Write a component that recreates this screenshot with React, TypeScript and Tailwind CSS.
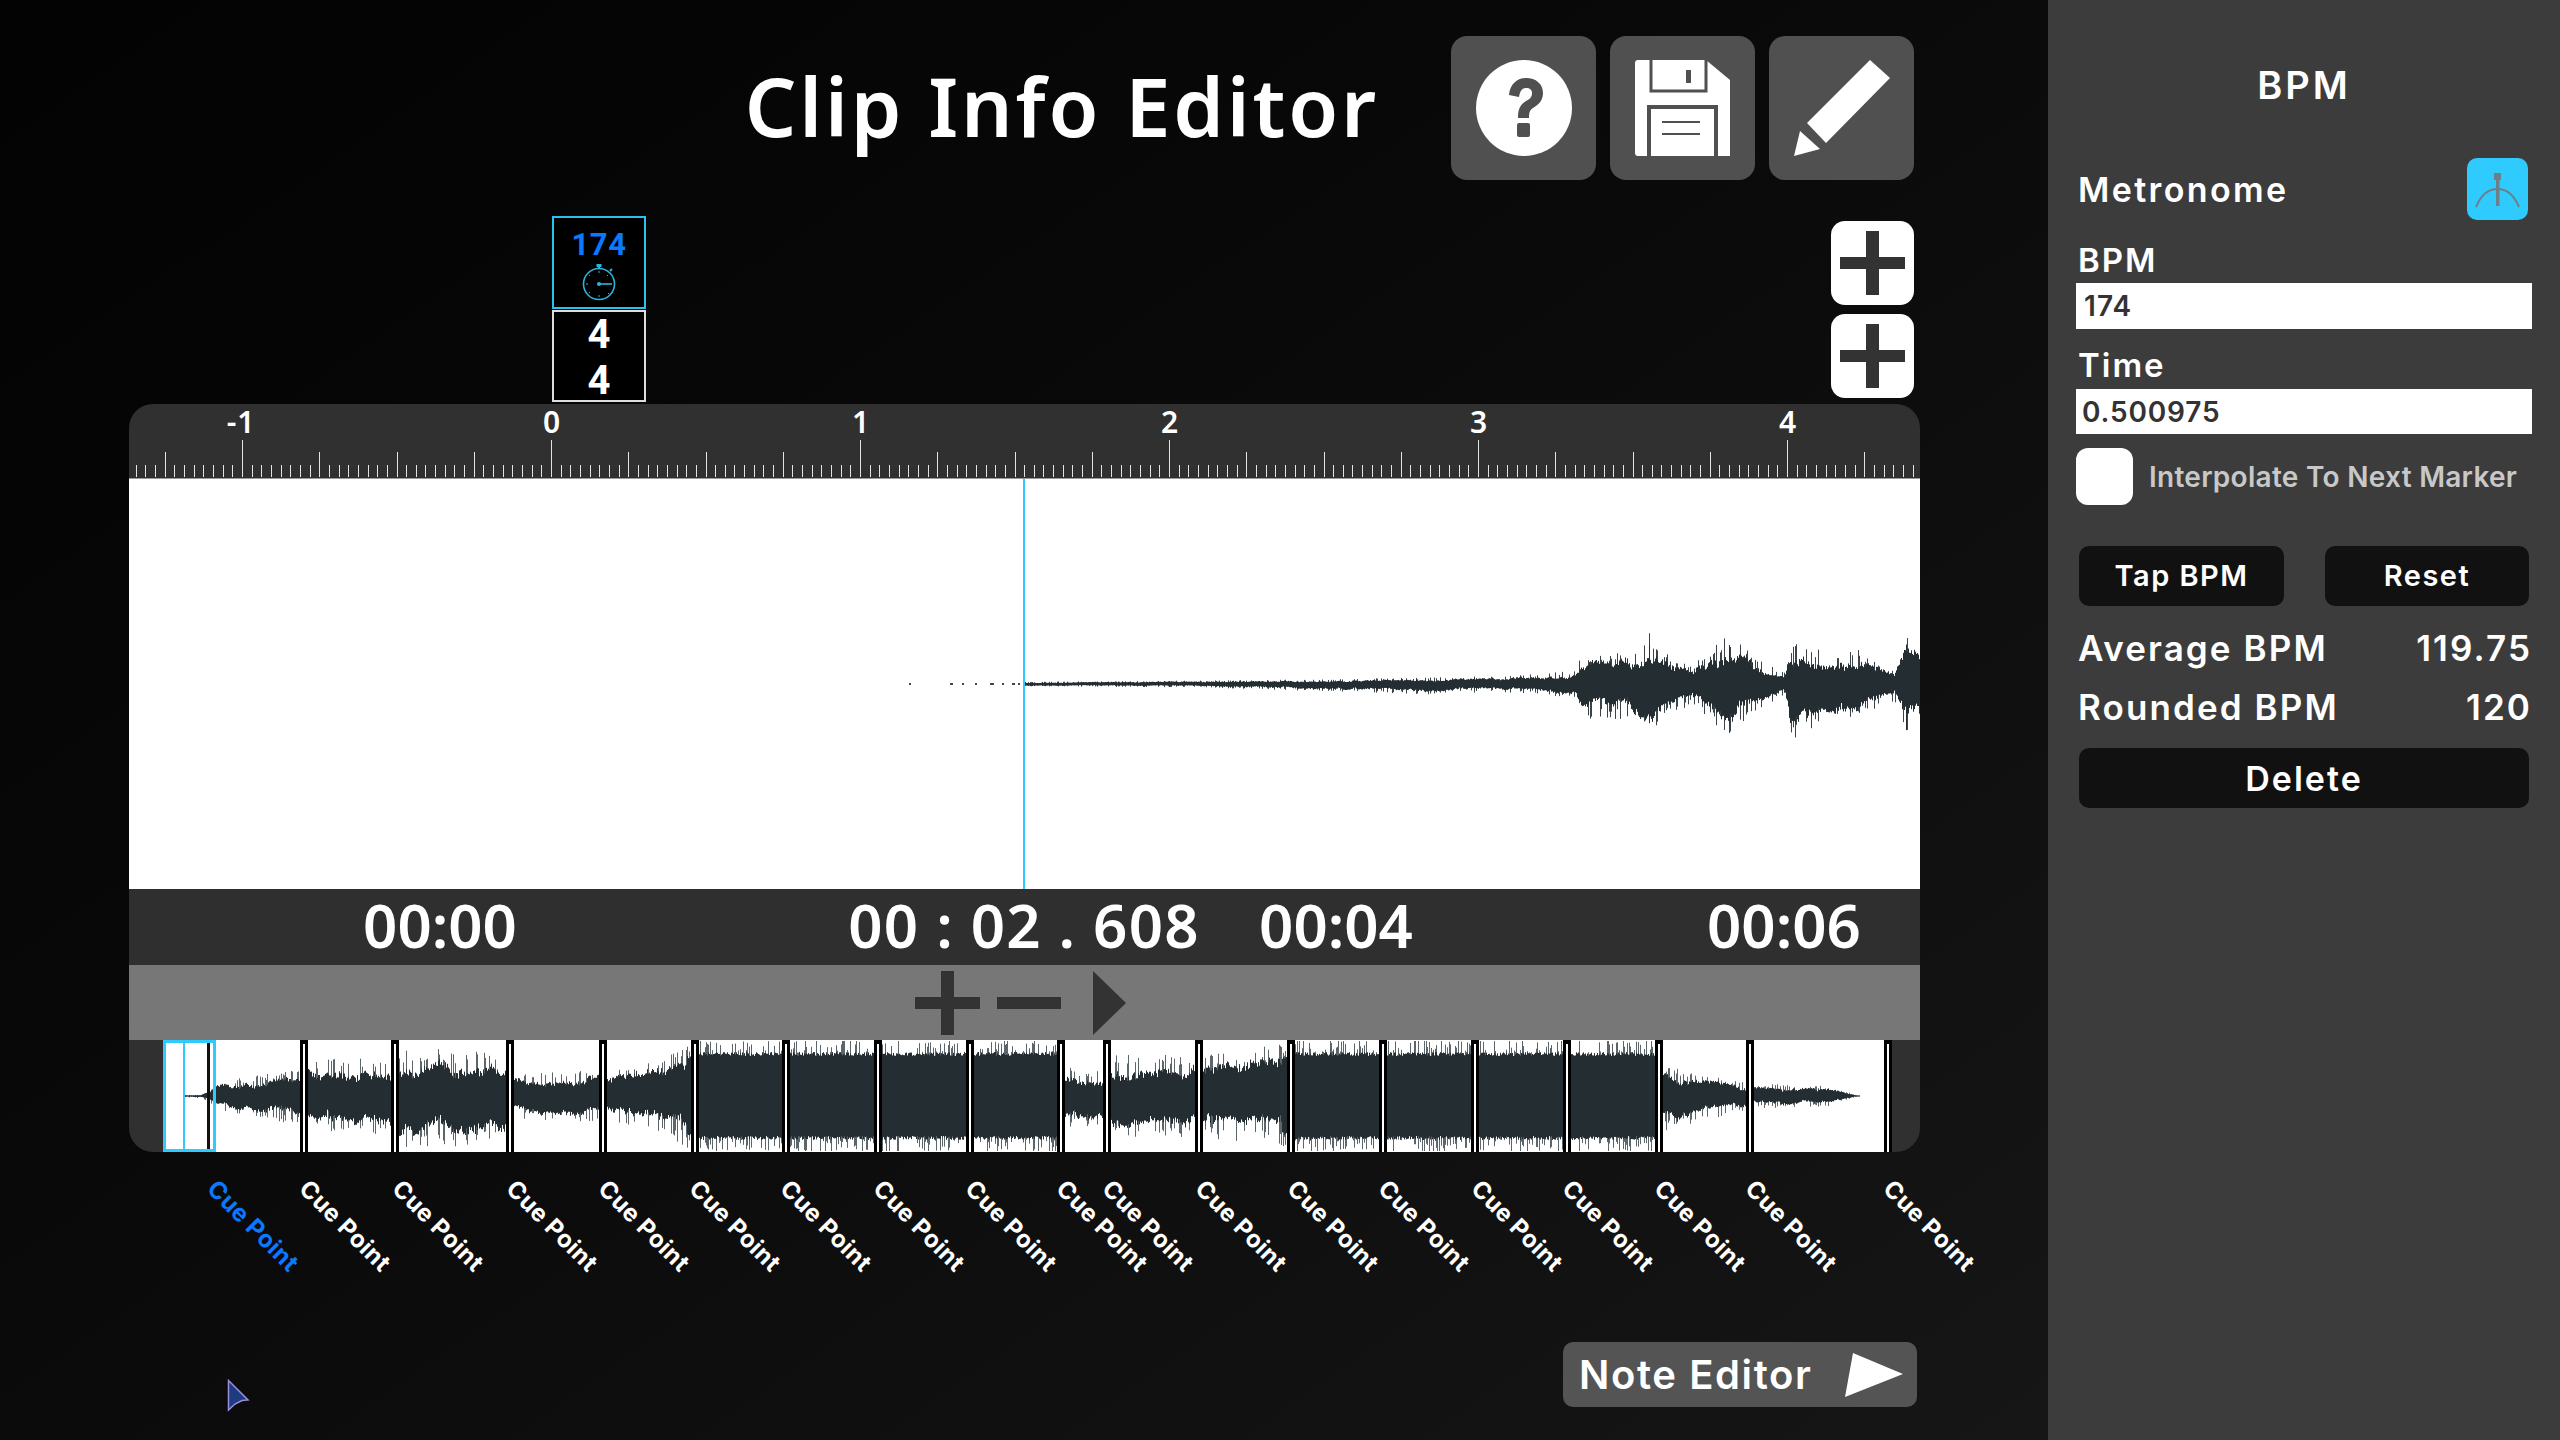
import { useMemo } from "react";

const cuePoints = [207, 299, 392, 506, 598, 689, 780, 873, 965, 1056, 1102, 1195, 1287, 1378, 1471, 1562, 1654, 1745, 1883];
const dividers = [304, 395, 510, 603, 695, 786, 878, 970, 1061, 1107, 1199, 1291, 1383, 1475, 1567, 1659, 1750, 1888];
const rulerLabels = [
  { text: "-1", x: 241 },
  { text: "0", x: 552 },
  { text: "1", x: 861 },
  { text: "2", x: 1170 },
  { text: "3", x: 1479 },
  { text: "4", x: 1788 },
];

type Env = [number, number, number][];

const mainEnv: Env = [
  [1024, 2, 2], [1200, 3, 3], [1310, 4, 6], [1380, 5, 8], [1430, 6, 9], [1500, 7, 7], [1540, 9, 9],
  [1575, 12, 13], [1582, 27, 32], [1600, 27, 30], [1630, 30, 32], [1649, 45, 45], [1670, 26, 26], [1692, 15, 18],
  [1710, 32, 32], [1729, 45, 47], [1760, 20, 22], [1784, 10, 9], [1790, 38, 50], [1820, 32, 34], [1860, 30, 32],
  [1894, 11, 15], [1906, 45, 53], [1920, 36, 42],
];

const overviewEnv: Env = [
  [184, 1, 1], [200, 1, 2], [209, 5, 5], [216, 13, 13], [304, 24, 26], [305, 32, 32], [395, 34, 34],
  [396, 42, 46], [510, 40, 42], [511, 20, 20], [603, 24, 24], [604, 22, 22], [670, 36, 36], [695, 50, 50],
  [696, 50, 50], [1061, 50, 50], [1062, 26, 28], [1107, 22, 26], [1108, 36, 36], [1199, 36, 36], [1291, 46, 46],
  [1292, 50, 50], [1659, 50, 50], [1660, 28, 32], [1750, 11, 11], [1751, 11, 11], [1830, 9, 9], [1858, 0, 0],
];

function lerp(env: Env, x: number, side: 1 | 2) {
  if (x <= env[0][0]) return env[0][side];
  for (let i = 1; i < env.length; i++) {
    if (x <= env[i][0]) {
      const a = env[i - 1];
      const b = env[i];
      return a[side] + ((b[side] - a[side]) * (x - a[0])) / (b[0] - a[0] || 1);
    }
  }
  return env[env.length - 1][side];
}

// small seeded generator so the wave looks the same on every render
function makeRandom(seed: number) {
  let s = seed;
  return () => {
    s = (s * 1664525 + 1013904223) % 4294967296;
    return s / 4294967296;
  };
}

function buildWave(env: Env, from: number, to: number, cy: number, maxAmp: number, seed: number) {
  const rnd = makeRandom(seed);
  let body = "";
  let spikes = "";
  let walk = 0.5;
  for (let x = from; x < to; x++) {
    walk = Math.min(1, Math.max(0, walk + (rnd() - 0.5) * 0.5));
    const up = lerp(env, x, 1);
    const down = lerp(env, x, 2);
    const loud = up >= 45 && down >= 45;
    const fa = loud ? 0.8 + rnd() * 0.08 : 0.42 + walk * 0.3 + rnd() * 0.18;
    const fb = loud ? 0.8 + rnd() * 0.08 : 0.42 + (1 - walk) * 0.3 + rnd() * 0.18;
    const a = Math.max(up * fa, 0.6);
    const b = Math.max(down * fb, 0.6);
    body += `M${x + 0.5} ${cy - a}V${cy + b}`;
    if (rnd() < (loud ? 0.45 : 0.24)) {
      const sa = Math.min(up * (0.8 + rnd() * 0.35), maxAmp);
      const sb = Math.min(down * (0.8 + rnd() * 0.35), maxAmp);
      spikes += `M${x + 0.5} ${cy - sa}V${cy + sb}`;
    }
  }
  return { body, spikes };
}

function MainWave() {
  const wave = useMemo(() => buildWave(mainEnv, 1024, 1920, 205, 60, 11), []);
  return (
    <svg className="absolute left-0 top-0" width={1791} height={411} viewBox="129 0 1791 411">
      <path d={wave.spikes} stroke="#3a4448" strokeWidth={1} />
      <path d={wave.body} stroke="#232d32" strokeWidth={1} />
      <path d="M909 205h2M950 205h3M962 205h2M975 205h2M990 205h4M1002 205h2M1012 205h3M1018 205h2" stroke="#444" strokeWidth={2} />
    </svg>
  );
}

function OverviewWave() {
  const wave = useMemo(() => buildWave(overviewEnv, 184, 1860, 56, 55, 29), []);
  return (
    <svg className="absolute left-[34px] top-0" width={1757} height={112} viewBox="163 0 1757 112">
      <path d={wave.spikes} stroke="#5c6569" strokeWidth={1} />
      <path d={wave.body} stroke="#232d32" strokeWidth={1} />
      {dividers.map((x) => (
        <g key={x}>
          <rect x={x - 4} y={0} width={8} height={112} fill="#000" />
          <rect x={x - 1} y={4} width={2} height={108} fill="#fff" />
        </g>
      ))}
      <rect x={207} y={0} width={3} height={112} fill="#111" />
      <rect x={164.5} y={1.5} width={50} height={109} fill="none" stroke="#2fcbff" strokeWidth={3} />
      <rect x={183} y={0} width={2} height={112} fill="#2fcbff" />
    </svg>
  );
}

function RulerTicks() {
  const step = 309 / 32;
  const lines = [];
  for (let i = -43; i < 142; i++) {
    const x = 422 + i * step;
    const h = i % 32 === 0 ? 37 : i % 8 === 0 ? 25 : 12;
    lines.push(<rect key={i} x={Math.round(x)} y={73 - h} width={1} height={h} fill="#e4e4e4" />);
  }
  return (
    <svg className="absolute left-0 top-0" width={1791} height={74} viewBox="0 0 1791 74">
      {lines}
    </svg>
  );
}

function PlusIcon({ color }: { color: string }) {
  return (
    <svg width={65} height={64} viewBox="0 0 65 64">
      <rect x={26} y={0} width={13} height={64} fill={color} />
      <rect x={0} y={26} width={65} height={12} fill={color} />
    </svg>
  );
}

function SaveIcon() {
  return (
    <svg width={95} height={96} viewBox="0 0 95 96">
      <path d="M3 0H71L95 20V96H3A3 3 0 0 1 0 93V3A3 3 0 0 1 3 0Z" fill="#fff" />
      <path d="M16 0V31H71V0" fill="none" stroke="#505050" strokeWidth={3} />
      <rect x={51} y={10} width={5} height={13} fill="#505050" />
      <path d="M14 96V47H81V96" fill="none" stroke="#505050" strokeWidth={4} />
      <rect x={27} y={61} width={38} height={2} fill="#505050" />
      <rect x={27} y={73} width={38} height={2} fill="#505050" />
    </svg>
  );
}

function PencilIcon() {
  return (
    <svg width={96} height={96} viewBox="0 0 96 96" fill="#fff">
      <path d="M76 0L96 18L32 83L13 63Z" />
      <path d="M6 71L26 89L0 96Z" />
    </svg>
  );
}

function HelpIcon() {
  return (
    <svg width={96} height={96} viewBox="0 0 96 96">
      <circle cx={48} cy={48} r={48} fill="#fff" />
      <path d="M33 35C34 24 41 18 50 18C60 18 67 24 67 33C67 41 62 45 57 48C54 50 53 52 53 58H42C42 49 44 45 50 41C54 39 56 37 56 33C56 30 54 28 50 28C46 28 44 31 43 37Z" fill="#505050" />
      <rect x={41} y={63} width={13} height={14} rx={2} fill="#505050" />
    </svg>
  );
}

function Stopwatch() {
  return (
    <svg width={36} height={38} viewBox="0 0 36 38" fill="none" stroke="#2cb5dc">
      <circle cx={18} cy={21} r={15.5} strokeWidth={1.6} />
      <rect x={15.5} y={1} width={5} height={3} fill="#2cb5dc" strokeWidth={0} />
      <path d="M18 3V6M29 8L31 6" strokeWidth={2} />
      <circle cx={18} cy={21} r={2} fill="#2cb5dc" strokeWidth={0} />
      <path d="M18 21H31" strokeWidth={1.6} />
      <path d="M18 8V10M18 32V34M8 12L9 13M27 30L28 31M8 30L9 29M5 21H7M27 12L26 13" strokeWidth={1} />
    </svg>
  );
}

function MetronomeIcon() {
  return (
    <svg width={61} height={62} viewBox="0 0 61 62" fill="none">
      <path d="M9 49C14 37 21 31 30.5 31C40 31 47 37 52 49" stroke="#6f7f88" strokeWidth={2} />
      <rect x={29} y={17} width={3.5} height={31} fill="#6f7f88" />
      <path d="M27 15H34V22H27Z" fill="#6f7f88" />
    </svg>
  );
}

const sideFont = "[font-family:Inter,'Noto_Sans',sans-serif]";

export default function App() {
  return (
    <div className="relative flex h-[1440px] w-[2560px] overflow-hidden [font-family:'Noto_Sans',sans-serif]">
      <div className="flex w-[2048px] flex-col bg-linear-to-br from-[#030303] to-[#161616]">
        {/* header */}
        <div className="flex items-center justify-end gap-[14px] pr-[134px] pt-[36px]">
          <h1 className="mr-[58px] whitespace-nowrap pb-[6px] text-[81px] font-semibold leading-none tracking-[0.035em] text-white">Clip Info Editor</h1>
          <div className="flex h-[144px] w-[145px] items-center justify-center rounded-[16px] bg-[#505050]">
            <HelpIcon />
          </div>
          <div className="flex h-[144px] w-[145px] items-center justify-center rounded-[16px] bg-[#505050]">
            <SaveIcon />
          </div>
          <div className="flex h-[144px] w-[145px] items-center justify-center rounded-[16px] bg-[#505050]">
            <PencilIcon />
          </div>
        </div>

        {/* marker and add buttons */}
        <div className="mt-[36px] flex h-[188px] pl-[552px] pr-[134px]">
          <div className="flex w-[94px] flex-col gap-[1px] [font-family:Roboto,sans-serif]">
            <div className="flex h-[93px] flex-col items-center border-2 border-[#2cc0ee] bg-black pt-[9px]">
              <span className="text-[31px] font-bold leading-[36px] tracking-[0.02em] text-[#0a78ff]">174</span>
              <Stopwatch />
            </div>
            <div className="flex h-[92px] flex-col items-center justify-center border-2 border-[#dddddd] bg-black pt-[3px] text-[40px] font-bold leading-[46px] text-white">
              <span>4</span>
              <span>4</span>
            </div>
          </div>
          <div className="ml-auto flex flex-col gap-[9px] pt-[5px]">
            <div className="flex h-[84px] w-[83px] items-center justify-center rounded-[14px] bg-white">
              <PlusIcon color="#333333" />
            </div>
            <div className="flex h-[84px] w-[83px] items-center justify-center rounded-[14px] bg-white">
              <PlusIcon color="#333333" />
            </div>
          </div>
        </div>

        {/* clip panel */}
        <div className="ml-[129px] mr-[128px] flex flex-col">
          <div className="relative h-[74px] rounded-t-[24px] bg-[#303030]">
            <RulerTicks />
            {rulerLabels.map((label) => (
              <span
                key={label.text}
                className="absolute top-0 -translate-x-1/2 text-[30px] font-semibold leading-[36px] tracking-[0.03em] text-white"
                style={{ left: label.x - 129 }}
              >
                {label.text}
              </span>
            ))}
          </div>
          <div className="relative h-[411px] border-t border-[#999999] bg-white">
            <MainWave />
            <div className="absolute bottom-0 left-[894px] top-0 w-[2px] bg-[#2fcbff]" />
          </div>
          <div className="flex h-[76px] items-center bg-[#2f2f2f] pb-[4px] text-[60px] font-semibold leading-none text-white">
            <span className="ml-[233px] w-[156px] text-center">00:00</span>
            <span className="ml-[330px] w-[352px] whitespace-pre text-center tracking-[0.02em]">00 : 02 . 608</span>
            <span className="ml-[59px] w-[154px] text-center">00:04</span>
            <span className="ml-[294px] w-[153px] text-center">00:06</span>
          </div>
          <div className="flex h-[75px] items-center bg-[#777777] pl-[786px]">
            <PlusIcon color="#333333" />
            <div className="ml-[17px] h-[12px] w-[64px] bg-[#333333]" />
            <svg className="ml-[32px]" width={33} height={64} viewBox="0 0 33 64">
              <path d="M0 0L33 32L0 64Z" fill="#333333" />
            </svg>
          </div>
          <div className="relative h-[112px] rounded-b-[24px] bg-[#303030]">
            <div className="absolute bottom-0 left-[34px] top-0 w-[1725px] bg-white" />
            <OverviewWave />
          </div>
        </div>

        {/* cue points */}
        <div className="relative h-[190px]">
          {cuePoints.map((x, i) => (
            <span
              key={x}
              className={`absolute top-[22px] origin-top-left rotate-45 whitespace-nowrap text-[24px] font-bold leading-[30px] tracking-[0.02em] ${sideFont} ${i === 0 ? "text-[#0a78ff]" : "text-white"}`}
              style={{ left: x + 15 }}
            >
              Cue Point
            </span>
          ))}
        </div>

        <div className="flex justify-end pr-[131px]">
          <div className={`flex h-[65px] w-[354px] items-center justify-between rounded-[10px] bg-[#545454] pl-[16px] pr-[14px] text-[40px] font-semibold tracking-[0.04em] text-white ${sideFont}`}>
            <span>Note Editor</span>
            <svg width={58} height={44} viewBox="0 0 58 44">
              <path d="M8 0L58 21L0 44Z" fill="#fff" />
            </svg>
          </div>
        </div>
      </div>

      {/* inspector */}
      <div className={`flex w-[512px] flex-col bg-[#3c3c3c] px-[28px] pt-[60px] font-semibold text-white ${sideFont}`}>
        <div className="h-[50px] text-center text-[38px] leading-[50px] tracking-[0.08em]">BPM</div>
        <div className="mt-[48px] flex h-[62px] items-center justify-between pl-[2px] pr-[4px]">
          <span className="text-[34px] tracking-[0.07em]">Metronome</span>
          <div className="h-[62px] w-[61px] rounded-[10px] bg-[#2fcbff]">
            <MetronomeIcon />
          </div>
        </div>
        <div className="mt-[17px] h-[46px] pl-[2px] text-[33px] leading-[46px] tracking-[0.06em]">BPM</div>
        <input readOnly value="174" className="h-[46px] w-full bg-white pl-[8px] text-[28px] font-semibold tracking-[0.04em] text-[#333333] outline-none" />
        <div className="mt-[12px] h-[48px] pl-[2px] text-[33px] leading-[48px] tracking-[0.06em]">Time</div>
        <input readOnly value="0.500975" className="h-[45px] w-full bg-white pl-[6px] text-[28px] font-semibold tracking-[0.03em] text-[#333333] outline-none" />
        <div className="mt-[14px] flex h-[57px] items-center gap-[16px]">
          <div className="h-[57px] w-[57px] rounded-[12px] bg-white" />
          <span className="whitespace-nowrap text-[28px] tracking-[0.01em] text-[#c8c8c8]">Interpolate To Next Marker</span>
        </div>
        <div className="mt-[41px] flex justify-between px-[3px] text-[29px] tracking-[0.05em]">
          <div className="flex h-[60px] w-[205px] items-center justify-center rounded-[10px] bg-[#111111]">Tap BPM</div>
          <div className="flex h-[60px] w-[204px] items-center justify-center rounded-[10px] bg-[#111111]">Reset</div>
        </div>
        <div className="mt-[12px] flex h-[60px] items-center justify-between pl-[2px] text-[35px] tracking-[0.06em]">
          <span>Average BPM</span>
          <span>119.75</span>
        </div>
        <div className="flex h-[58px] items-center justify-between pl-[2px] text-[35px] tracking-[0.06em]">
          <span>Rounded BPM</span>
          <span>120</span>
        </div>
        <div className="mx-[3px] mt-[12px] flex h-[60px] items-center justify-center rounded-[10px] bg-[#111111] text-[34px] tracking-[0.06em]">
          Delete
        </div>
      </div>

      {/* mouse pointer captured in the shot */}
      <svg className="absolute left-[227px] top-[1379px]" width={24} height={34} viewBox="0 0 24 34">
        <path d="M1.500 1.500L21 21L15 21.500L8 25L1.500 31Z" fill="#1f3b80" stroke="#9c8ce0" strokeWidth={1.500} />
      </svg>
    </div>
  );
}
